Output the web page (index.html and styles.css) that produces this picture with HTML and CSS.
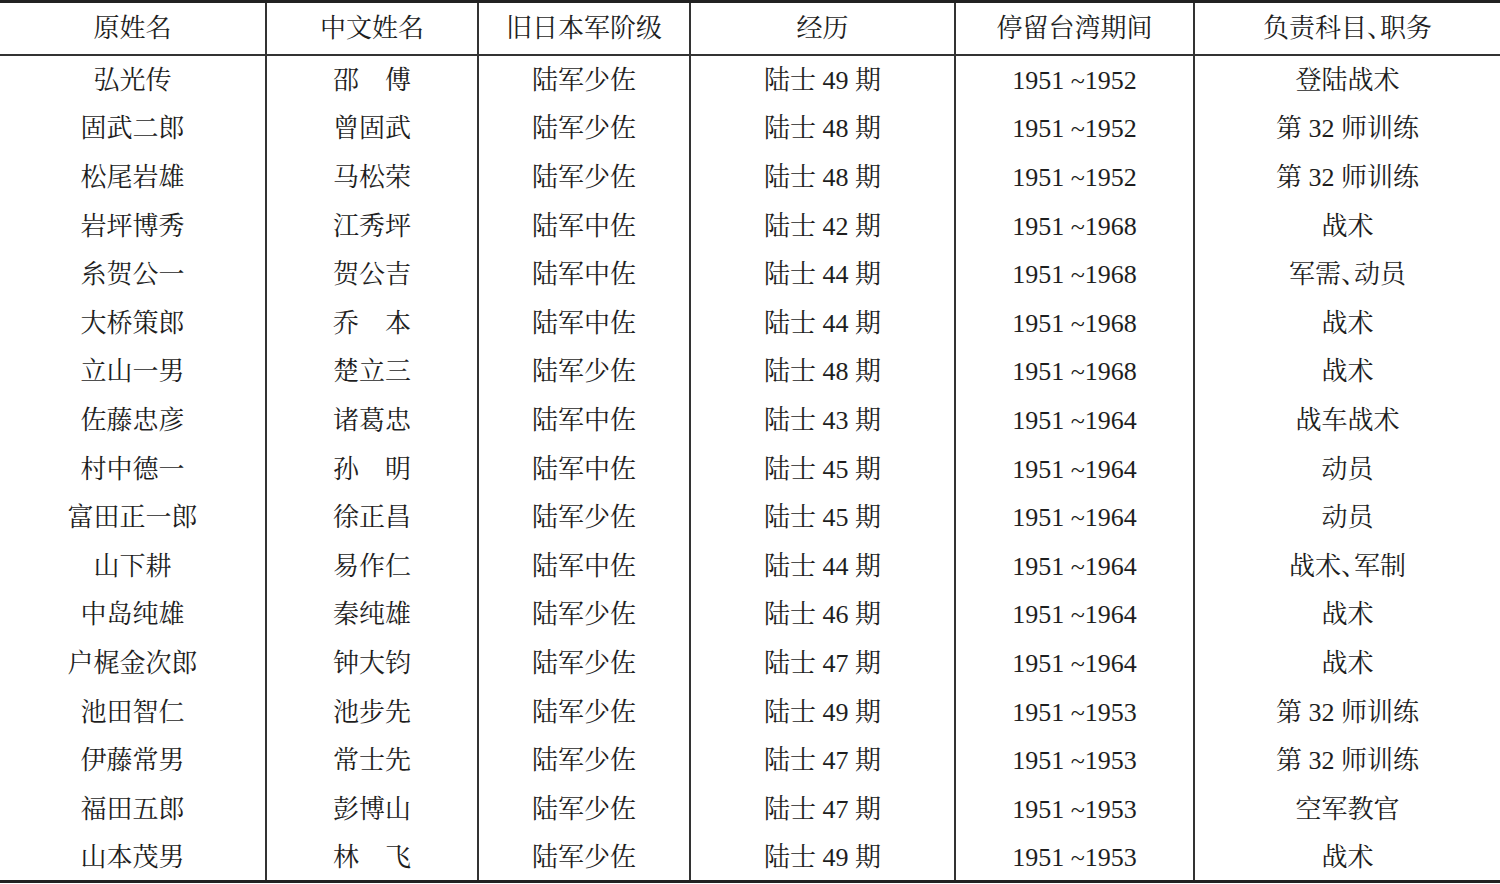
FILE: index.html
```html
<!DOCTYPE html>
<html lang="zh-CN">
<head>
<meta charset="utf-8">
<title>表</title>
<link rel="stylesheet" href="styles.css">
</head>
<body>
<table class="tbl">
  <colgroup>
    <col class="c1"><col class="c2"><col class="c3"><col class="c4"><col class="c5"><col class="c6">
  </colgroup>
  <thead>
    <tr class="head">
      <th>原姓名</th><th>中文姓名</th><th>旧日本军阶级</th><th>经历</th><th>停留台湾期间</th><th>负责科目<span class="dun">、</span>职务</th>
    </tr>
  </thead>
  <tbody>
    <tr><td>弘光传</td><td>邵　傅</td><td>陆军少佐</td><td>陆士 49 期</td><td>1951 ~1952</td><td>登陆战术</td></tr>
    <tr><td>固武二郎</td><td>曾固武</td><td>陆军少佐</td><td>陆士 48 期</td><td>1951 ~1952</td><td>第 32 师训练</td></tr>
    <tr><td>松尾岩雄</td><td>马松荣</td><td>陆军少佐</td><td>陆士 48 期</td><td>1951 ~1952</td><td>第 32 师训练</td></tr>
    <tr><td>岩坪博秀</td><td>江秀坪</td><td>陆军中佐</td><td>陆士 42 期</td><td>1951 ~1968</td><td>战术</td></tr>
    <tr><td>糸贺公一</td><td>贺公吉</td><td>陆军中佐</td><td>陆士 44 期</td><td>1951 ~1968</td><td>军需<span class="dun">、</span>动员</td></tr>
    <tr><td>大桥策郎</td><td>乔　本</td><td>陆军中佐</td><td>陆士 44 期</td><td>1951 ~1968</td><td>战术</td></tr>
    <tr><td>立山一男</td><td>楚立三</td><td>陆军少佐</td><td>陆士 48 期</td><td>1951 ~1968</td><td>战术</td></tr>
    <tr><td>佐藤忠彦</td><td>诸葛忠</td><td>陆军中佐</td><td>陆士 43 期</td><td>1951 ~1964</td><td>战车战术</td></tr>
    <tr><td>村中德一</td><td>孙　明</td><td>陆军中佐</td><td>陆士 45 期</td><td>1951 ~1964</td><td>动员</td></tr>
    <tr><td>富田正一郎</td><td>徐正昌</td><td>陆军少佐</td><td>陆士 45 期</td><td>1951 ~1964</td><td>动员</td></tr>
    <tr><td>山下耕</td><td>易作仁</td><td>陆军中佐</td><td>陆士 44 期</td><td>1951 ~1964</td><td>战术<span class="dun">、</span>军制</td></tr>
    <tr><td>中岛纯雄</td><td>秦纯雄</td><td>陆军少佐</td><td>陆士 46 期</td><td>1951 ~1964</td><td>战术</td></tr>
    <tr><td>户梶金次郎</td><td>钟大钧</td><td>陆军少佐</td><td>陆士 47 期</td><td>1951 ~1964</td><td>战术</td></tr>
    <tr><td>池田智仁</td><td>池步先</td><td>陆军少佐</td><td>陆士 49 期</td><td>1951 ~1953</td><td>第 32 师训练</td></tr>
    <tr><td>伊藤常男</td><td>常士先</td><td>陆军少佐</td><td>陆士 47 期</td><td>1951 ~1953</td><td>第 32 师训练</td></tr>
    <tr><td>福田五郎</td><td>彭博山</td><td>陆军少佐</td><td>陆士 47 期</td><td>1951 ~1953</td><td>空军教官</td></tr>
    <tr><td>山本茂男</td><td>林　飞</td><td>陆军少佐</td><td>陆士 49 期</td><td>1951 ~1953</td><td>战术</td></tr>
  </tbody>
</table>
</body>
</html>
```

FILE: styles.css
```css
html, body {
  margin: 0;
  padding: 0;
  background: #ffffff;
}

body {
  font-family: "Liberation Serif", "Noto Serif CJK SC", "Noto Sans CJK SC", serif;
  color: #1e1e1e;
}

.tbl {
  width: 1500px;
  table-layout: fixed;
  border-collapse: collapse;
  border-top: 3px solid #222;
  border-bottom: 3px solid #222;
}

.c1 { width: 266px; }
.c2 { width: 212px; }
.c3 { width: 212px; }
.c4 { width: 265px; }
.c5 { width: 239px; }
.c6 { width: 306px; }

.tbl th,
.tbl td {
  padding: 0;
  text-align: center;
  vertical-align: middle;
  font-size: 26px;
  font-weight: normal;
  line-height: 30px;
  border-left: 2px solid #333;
  white-space: nowrap;
}

.tbl td {
  padding-top: 3px;
}

.tbl th:first-child,
.tbl td:first-child {
  border-left: none;
}

.head th {
  height: 50px;
  padding-top: 1px;
  border-bottom: 2px solid #333;
}

.tbl tbody tr {
  height: 48.6px;
}

.dun {
  letter-spacing: -0.5em;
}
```
